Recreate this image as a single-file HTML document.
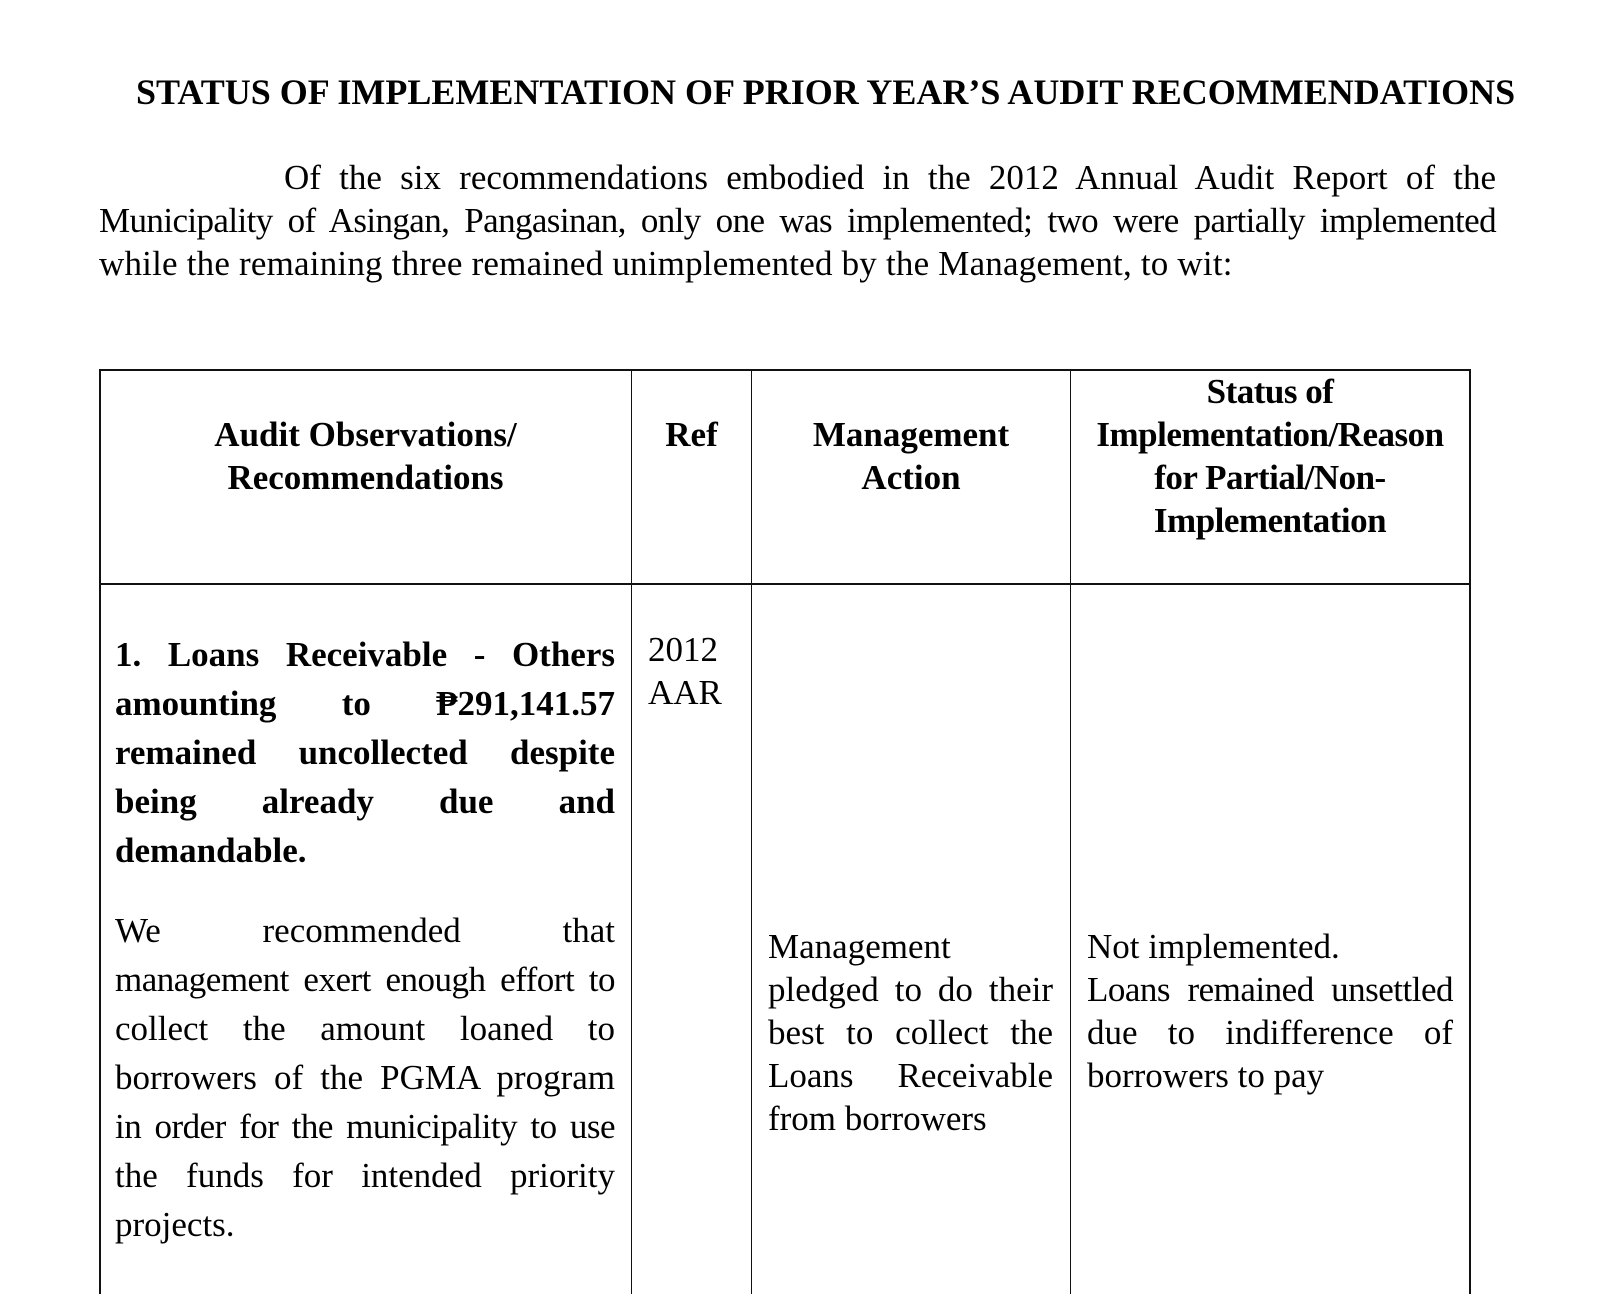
<!DOCTYPE html>
<html><head><meta charset="utf-8"><style>
body{margin:0;background:#fff;width:1598px;height:1294px;overflow:hidden;position:relative;font-family:"Liberation Serif",serif;color:#000;font-size:35px}
.a{position:absolute;white-space:nowrap}
.j{position:absolute;text-align:justify;text-align-last:justify;white-space:nowrap}
.b{font-weight:bold}
.c{position:absolute;text-align:center}
.h{position:absolute;background:#111}
</style></head><body>
<div class="a b" style="left:136px;top:71px;line-height:42px;font-size:36px">STATUS OF IMPLEMENTATION OF PRIOR YEAR’S AUDIT RECOMMENDATIONS</div>
<div class="j" style="left:284px;top:156px;width:1212px;line-height:43px">Of the six recommendations embodied in the 2012 Annual Audit Report of the</div>
<div class="j" style="left:99px;top:199px;width:1397px;line-height:43px;letter-spacing:-0.6px">Municipality of Asingan, Pangasinan, only one was implemented; two were partially implemented</div>
<div class="a" style="left:99px;top:242px;line-height:43px;letter-spacing:0.2px">while the remaining three remained unimplemented by the Management, to wit:</div>

<div class="h" style="left:99px;top:369px;width:1372px;height:2px"></div>
<div class="h" style="left:99px;top:583px;width:1372px;height:2px"></div>
<div class="h" style="left:99px;top:369px;width:2px;height:925px"></div>
<div class="h" style="left:631px;top:369px;width:1px;height:925px"></div>
<div class="h" style="left:751px;top:369px;width:1px;height:925px"></div>
<div class="h" style="left:1070px;top:369px;width:1px;height:925px"></div>
<div class="h" style="left:1469px;top:369px;width:2px;height:925px"></div>

<div class="c b" style="left:100px;width:531px;top:413px;line-height:43px">Audit Observations/<br>Recommendations</div>
<div class="c b" style="left:632px;width:119px;top:413px;line-height:43px">Ref</div>
<div class="c b" style="left:752px;width:318px;top:413px;line-height:43px">Management<br>Action</div>
<div class="c b" style="left:1071px;width:398px;top:370px;line-height:43px;letter-spacing:-0.5px">Status of<br>Implementation/Reason<br>for Partial/Non-<br>Implementation</div>

<div class="b" style="position:absolute;left:115px;top:630px;width:500px;line-height:49px">
<div style="text-align-last:justify">1. Loans Receivable - Others</div>
<div style="text-align-last:justify">amounting to ₱291,141.57</div>
<div style="text-align-last:justify">remained uncollected despite</div>
<div style="text-align-last:justify">being already due and</div>
<div>demandable.</div></div>
<div style="position:absolute;left:115px;top:906px;width:500px;line-height:49px">
<div style="text-align-last:justify">We recommended that</div>
<div style="text-align-last:justify;letter-spacing:-0.5px">management exert enough effort to</div>
<div style="text-align-last:justify">collect the amount loaned to</div>
<div style="text-align-last:justify">borrowers of the PGMA program</div>
<div style="text-align-last:justify;letter-spacing:-0.5px">in order for the municipality to use</div>
<div style="text-align-last:justify">the funds for intended priority</div>
<div>projects.</div></div>
<div class="a" style="left:648px;top:628px;line-height:43px">2012<br>AAR</div>
<div style="position:absolute;left:768px;top:925px;width:285px;line-height:43px">
<div>Management</div>
<div style="text-align-last:justify">pledged to do their</div>
<div style="text-align-last:justify">best to collect the</div>
<div style="text-align-last:justify">Loans Receivable</div>
<div>from borrowers</div></div>
<div style="position:absolute;left:1087px;top:925px;width:366px;line-height:43px">
<div>Not implemented.</div>
<div style="text-align-last:justify;letter-spacing:-0.5px">Loans remained unsettled</div>
<div style="text-align-last:justify">due to indifference of</div>
<div>borrowers to pay</div></div>
</body></html>
